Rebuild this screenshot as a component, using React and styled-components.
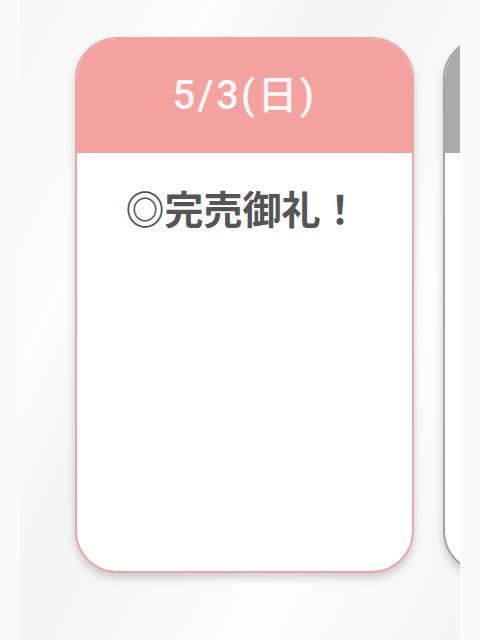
import React from 'react';
import styled, { createGlobalStyle } from 'styled-components';

const GlobalStyle = createGlobalStyle`
    html, body {
        margin: 0;
        padding: 0;
        background: #f9f9fa;
    }
    body {
        font-family: "Noto Sans CJK JP", "Noto Sans", sans-serif;
    }
`;

const Page = styled.div`
    width: 480px;
    height: 640px;
    display: flex;
    background: #fafafa;
`;

const Viewport = styled.div`
    flex: 1;
    margin: 0 20px;
    overflow: hidden;
    padding-top: 37px;
    background: linear-gradient(
        118deg,
        #f6f6f7 0%,
        #fcfcfc 25%,
        #f4f4f5 40%,
        #f8f8f9 58%,
        #fdfdfd 72%,
        #f5f5f6 100%
    );
`;

const Track = styled.div`
    display: flex;
    gap: 29px;
    padding-left: 55px;
`;

const Card = styled.div`
    flex: 0 0 339px;
    height: 536px;
    box-sizing: border-box;
    border: 2px solid ${(p) => p.$border};
    border-radius: 42px;
    overflow: hidden;
    background: #fff;
    box-shadow: 0 5px 9px rgba(0, 0, 0, 0.18);
    display: flex;
    flex-direction: column;
`;

const Header = styled.div`
    height: 114px;
    box-sizing: border-box;
    padding-bottom: 8px;
    flex: 0 0 auto;
    background: ${(p) => p.$bg};
    color: #fff8f7;
    display: flex;
    align-items: center;
    justify-content: center;
    font-family: Roboto, "Noto Sans CJK JP", sans-serif;
    font-size: 40px;
    font-weight: 500;
    letter-spacing: 2.5px;
`;

const Body = styled.div`
    padding: 26px 4px 0 0;
    text-align: center;
    color: #555;
    font-size: 39px;
    font-weight: 700;
`;

const days = [
    { date: '5/3(日)', note: '◎完売御礼！', bg: '#f4a29f', border: '#eaa6a4' },
    { date: '', note: '', bg: '#aaaaaa', border: '#a3a3a3' },
];

const App = () => {
    return (
        <>
            <GlobalStyle />
            <Page>
                <Viewport>
                    <Track>
                        {days.map((d, i) => (
                            <Card key={i} $border={d.border}>
                                <Header $bg={d.bg}>{d.date}</Header>
                                <Body>{d.note}</Body>
                            </Card>
                        ))}
                    </Track>
                </Viewport>
            </Page>
        </>
    );
};

export default App;
